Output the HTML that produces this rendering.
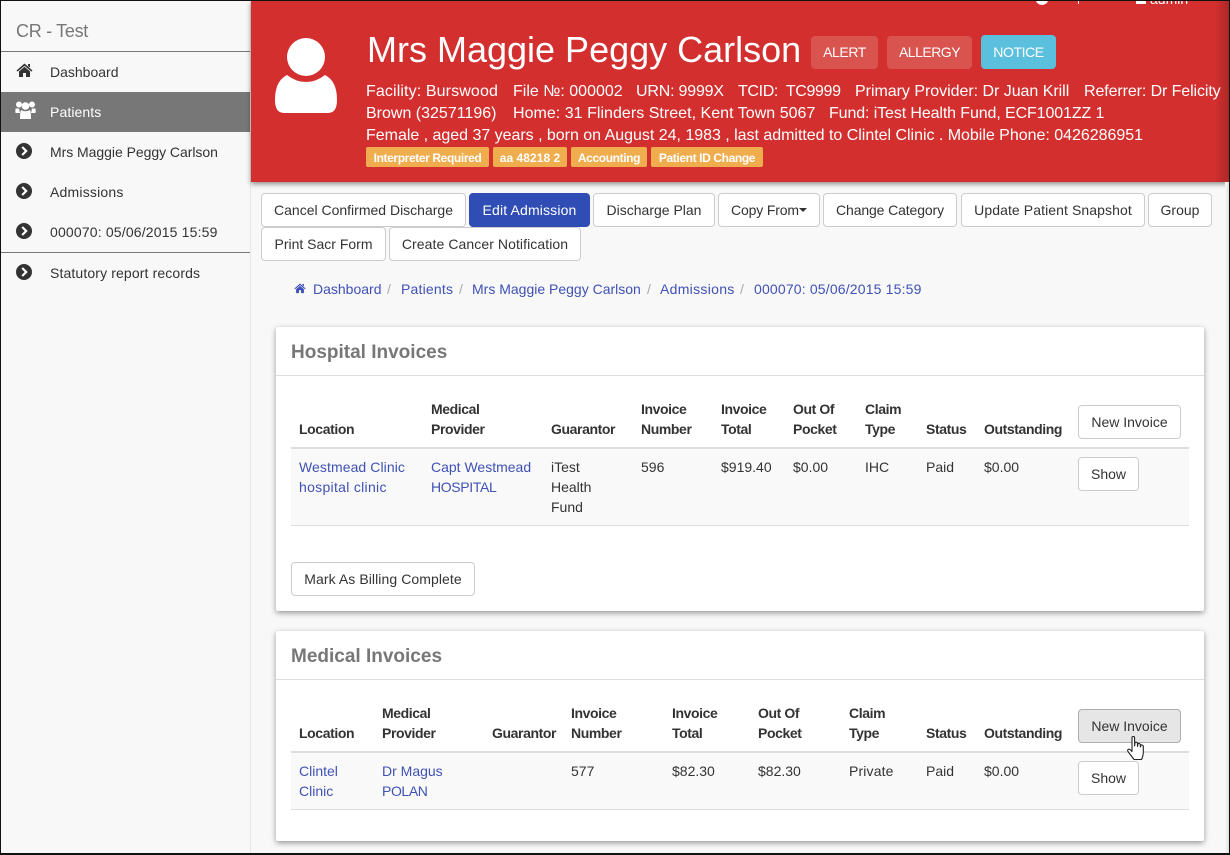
<!DOCTYPE html>
<html><head><meta charset="utf-8"><title>Invoices</title>
<style>
*{box-sizing:border-box}
html,body{margin:0;padding:0;width:1230px;height:855px;overflow:hidden;background:#f8f8f8;font-family:"Liberation Sans",sans-serif;font-size:14px;color:#333}
.a{position:absolute}
.t{position:absolute;white-space:nowrap;line-height:20px}
a{color:#3f51b5;text-decoration:none}
.btn{position:absolute;background:#fff;border:1px solid #ccc;border-radius:4px;display:flex;align-items:center;justify-content:center;white-space:nowrap;color:#333}
.w{color:#fff}
.lab{position:absolute;top:147px;height:20px;padding-top:1px;background:#f0ad4e;color:#fff;font-size:12px;font-weight:bold;letter-spacing:-.38px;display:flex;align-items:center;justify-content:center;border-radius:2px;white-space:nowrap}
.info{position:absolute;color:#fff;font-size:16px;line-height:22px;white-space:nowrap}
.panel{position:absolute;left:276px;width:928px;background:#fff;border-radius:2px;box-shadow:0 2px 6px rgba(0,0,0,.4)}
.h{font-weight:bold;color:#333;letter-spacing:-.4px}
.s{color:#aaa}
.pt{font-size:19px;font-weight:bold;color:#777}
</style></head><body>
<div class="a" style="left:1px;top:1px;width:250px;height:853px;background:#f8f8f8;border-right:1px solid #e7e7e7"></div>
<div class="t" style="left:16px;top:21px;font-size:18px;color:#777;letter-spacing:-.3px">CR - Test</div>
<div class="a" style="left:1px;top:51px;width:249px;height:1px;background:#777"></div>
<div class="a" style="left:1px;top:92px;width:249px;height:40px;background:#777"></div>
<div class="a" style="left:1px;top:252px;width:249px;height:1px;background:#777"></div>
<svg class="a" style="left:16px;top:63px" width="17" height="15" viewBox="0 0 17 15"><path d="M8.5 0.5 L16.5 7.5 L15.5 8.6 L8.5 2.7 L1.5 8.6 L0.5 7.5 Z M12 1 H14 V4.5 L12 3 Z M8.5 3.8 L14 8.4 V14 H10 V10 H7 V14 H3 V8.4 Z" fill="#333"/></svg>
<svg class="a" style="left:15px;top:100px" width="21" height="20" viewBox="0 0 21 20"><g fill="#fff"><circle cx="4" cy="4.5" r="3"/><circle cx="17" cy="4.5" r="3"/><circle cx="10.5" cy="6" r="3.8"/><path d="M0.5 8.5 H4 L5 13 H1 Q0.3 13 0.3 12 Z M20.5 8.5 H17 L16 13 H20 Q20.7 13 20.7 12 Z"/><path d="M6 10 Q10.5 12.5 15 10 Q16 12 16 19 H5 Q5 12 6 10 Z"/></g></svg>
<svg class="a" style="left:16px;top:143px" width="16" height="16" viewBox="0 0 16 16"><circle cx="8" cy="8" r="8" fill="#333"/><path d="M6.2 4 L10.2 8 L6.2 12" fill="none" stroke="#fff" stroke-width="2.2"/></svg>
<svg class="a" style="left:16px;top:183px" width="16" height="16" viewBox="0 0 16 16"><circle cx="8" cy="8" r="8" fill="#333"/><path d="M6.2 4 L10.2 8 L6.2 12" fill="none" stroke="#fff" stroke-width="2.2"/></svg>
<svg class="a" style="left:16px;top:223px" width="16" height="16" viewBox="0 0 16 16"><circle cx="8" cy="8" r="8" fill="#333"/><path d="M6.2 4 L10.2 8 L6.2 12" fill="none" stroke="#fff" stroke-width="2.2"/></svg>
<svg class="a" style="left:16px;top:264px" width="16" height="16" viewBox="0 0 16 16"><circle cx="8" cy="8" r="8" fill="#333"/><path d="M6.2 4 L10.2 8 L6.2 12" fill="none" stroke="#fff" stroke-width="2.2"/></svg>
<div class="t" style="left:50px;top:62px">Dashboard</div>
<div class="t w" style="left:50px;top:102px;letter-spacing:.1px">Patients</div>
<div class="t" style="left:50px;top:142px;letter-spacing:-.04px">Mrs Maggie Peggy Carlson</div>
<div class="t" style="left:50px;top:182px;letter-spacing:.2px">Admissions</div>
<div class="t" style="left:50px;top:222px;letter-spacing:.17px">000070: 05/06/2015 15:59</div>
<div class="t" style="left:50px;top:263px;letter-spacing:.13px">Statutory report records</div>

<div class="a" style="left:251px;top:1px;width:978px;height:181px;background:#d32f2f;box-shadow:0 2px 5px rgba(0,0,0,.45)"></div>
<div class="a" style="left:1215px;top:1px;width:14px;height:181px;background:linear-gradient(90deg,rgba(0,0,0,0),rgba(0,0,0,.18))"></div>
<div class="a" style="left:1036px;top:-5px;width:12px;height:10px;background:#fff;border-radius:50%"></div>
<div class="a" style="left:1078px;top:1px;width:1px;height:3px;background:#fff"></div>
<div class="a" style="left:1136px;top:1px;width:10px;height:3px;background:#fff"></div>
<div class="a" style="left:1150px;top:1px;width:40px;height:4px;overflow:hidden"><div class="t w" style="left:0;top:-12px">admin</div></div>
<svg class="a" style="left:275px;top:38px" width="63" height="75" viewBox="0 0 63 75"><circle cx="31" cy="19" r="19" fill="#fff"/><path d="M12 37 Q21 44 31 44 Q41 44 50 37 Q62 43 62 62 Q62 75 53 75 H9 Q0 75 0 62 Q0 43 12 37 Z" fill="#fff"/></svg>
<div class="t w" style="left:367px;top:30px;font-size:36px;line-height:40px">Mrs Maggie Peggy Carlson</div>
<div class="btn w" style="left:811px;top:36px;width:67px;height:33px;padding-bottom:2px;background:#d9534f;border-color:#d9534f;letter-spacing:-.4px">ALERT</div>
<div class="btn w" style="left:887px;top:36px;width:85px;height:33px;padding-bottom:2px;background:#d9534f;border-color:#d9534f;letter-spacing:-.5px">ALLERGY</div>
<div class="btn w" style="left:981px;top:35px;width:75px;height:34px;background:#5bc0de;border-color:#5bc0de;letter-spacing:-.4px">NOTICE</div>
<div class="info" style="left:366px;top:81px;letter-spacing:.12px">Facility: Burswood</div>
<div class="info" style="left:513px;top:81px">File №: 000002</div>
<div class="info" style="left:636px;top:81px;letter-spacing:-.2px">URN: 9999X</div>
<div class="info" style="left:738px;top:81px;letter-spacing:-.36px">TCID:&nbsp; TC9999</div>
<div class="info" style="left:855px;top:81px;letter-spacing:-.03px">Primary Provider: Dr Juan Krill</div>
<div class="info" style="left:1084px;top:81px;letter-spacing:-.1px">Referrer: Dr Felicity</div>
<div class="info" style="left:366px;top:103px">Brown (32571196)</div>
<div class="info" style="left:513px;top:103px;letter-spacing:.03px">Home: 31 Flinders Street, Kent Town 5067</div>
<div class="info" style="left:829px;top:103px;letter-spacing:-.11px">Fund: iTest Health Fund, ECF1001ZZ 1</div>
<div class="info" style="left:366px;top:125px;letter-spacing:-.02px">Female , aged 37 years , born on August 24, 1983 , last admitted to Clintel Clinic . Mobile Phone: 0426286951</div>
<div class="lab" style="left:366px;width:123px">Interpreter Required</div>
<div class="lab" style="left:493px;width:74px;letter-spacing:.05px">aa 48218 2</div>
<div class="lab" style="left:571px;width:76px">Accounting</div>
<div class="lab" style="left:651px;width:112px">Patient ID Change</div>

<div class="btn" style="left:261px;top:193px;width:205px;height:34px">Cancel Confirmed Discharge</div>
<div class="btn w" style="left:469px;top:193px;width:121px;height:34px;background:#2f4db5;border-color:#2f4db5;letter-spacing:.15px">Edit Admission</div>
<div class="btn" style="left:593px;top:193px;width:122px;height:34px">Discharge Plan</div>
<div class="btn" style="left:718px;top:193px;width:102px;height:34px;letter-spacing:-.15px">Copy From<span style="display:inline-block;margin-left:0;border-top:4px solid #333;border-left:4px solid transparent;border-right:4px solid transparent"></span></div>
<div class="btn" style="left:823px;top:193px;width:134px;height:34px;letter-spacing:-.12px">Change Category</div>
<div class="btn" style="left:961px;top:193px;width:184px;height:34px;letter-spacing:.09px">Update Patient Snapshot</div>
<div class="btn" style="left:1148px;top:193px;width:64px;height:34px">Group</div>
<div class="btn" style="left:261px;top:227px;width:125px;height:34px">Print Sacr Form</div>
<div class="btn" style="left:389px;top:227px;width:192px;height:34px;letter-spacing:.08px">Create Cancer Notification</div>

<svg class="a" style="left:294px;top:283px" width="12" height="11" viewBox="0 0 17 15"><path d="M8.5 0.5 L16.5 7.5 L15.5 8.6 L8.5 2.7 L1.5 8.6 L0.5 7.5 Z M12 1 H14 V4.5 L12 3 Z M8.5 3.8 L14 8.4 V14 H10 V10 H7 V14 H3 V8.4 Z" fill="#3f51b5"/></svg>
<a class="t" style="left:313px;top:279px">Dashboard</a><span class="t s" style="left:387px;top:279px">/</span>
<a class="t" style="left:401px;top:279px;letter-spacing:.2px">Patients</a><span class="t s" style="left:459px;top:279px">/</span>
<a class="t" style="left:472px;top:279px">Mrs Maggie Peggy Carlson</a><span class="t s" style="left:647px;top:279px">/</span>
<a class="t" style="left:660px;top:279px;letter-spacing:.3px">Admissions</a><span class="t s" style="left:740px;top:279px">/</span>
<a class="t" style="left:754px;top:279px;letter-spacing:.17px">000070: 05/06/2015 15:59</a>

<div class="panel" style="top:327px;height:284px"></div>
<div class="t pt" style="left:291px;top:343px">Hospital Invoices</div>
<div class="a" style="left:276px;top:375px;width:928px;height:1px;background:#ddd"></div>
<div class="a" style="left:291px;top:447px;width:898px;height:2px;background:#ddd"></div>
<div class="a" style="left:291px;top:449px;width:898px;height:76px;background:#f9f9f9"></div>
<div class="a" style="left:291px;top:525px;width:898px;height:1px;background:#ddd"></div>
<div class="t h" style="left:299px;top:419px">Location</div>
<div class="t h" style="left:431px;top:399px">Medical<br>Provider</div>
<div class="t h" style="left:551px;top:419px">Guarantor</div>
<div class="t h" style="left:641px;top:399px">Invoice<br>Number</div>
<div class="t h" style="left:721px;top:399px">Invoice<br>Total</div>
<div class="t h" style="left:793px;top:399px">Out Of<br>Pocket</div>
<div class="t h" style="left:865px;top:399px">Claim<br>Type</div>
<div class="t h" style="left:926px;top:419px">Status</div>
<div class="t h" style="left:984px;top:419px">Outstanding</div>
<div class="btn" style="left:1078px;top:405px;width:103px;height:34px">New Invoice</div>
<a class="t" style="left:299px;top:457px;letter-spacing:.08px">Westmead Clinic</a>
<a class="t" style="left:299px;top:477px;letter-spacing:.3px">hospital clinic</a>
<a class="t" style="left:431px;top:457px">Capt Westmead</a>
<a class="t" style="left:431px;top:477px;letter-spacing:-.35px">HOSPITAL</a>
<div class="t" style="left:551px;top:457px">iTest<br>Health<br>Fund</div>
<div class="t" style="left:641px;top:457px">596</div>
<div class="t" style="left:721px;top:457px">$919.40</div>
<div class="t" style="left:793px;top:457px">$0.00</div>
<div class="t" style="left:865px;top:457px">IHC</div>
<div class="t" style="left:926px;top:457px">Paid</div>
<div class="t" style="left:984px;top:457px">$0.00</div>
<div class="btn" style="left:1078px;top:457px;width:61px;height:34px">Show</div>
<div class="btn" style="left:291px;top:562px;width:184px;height:34px;letter-spacing:.08px">Mark As Billing Complete</div>

<div class="panel" style="top:631px;height:210px"></div>
<div class="t pt" style="left:291px;top:647px">Medical Invoices</div>
<div class="a" style="left:276px;top:679px;width:928px;height:1px;background:#ddd"></div>
<div class="a" style="left:291px;top:751px;width:898px;height:2px;background:#ddd"></div>
<div class="a" style="left:291px;top:753px;width:898px;height:56px;background:#f9f9f9"></div>
<div class="a" style="left:291px;top:809px;width:898px;height:1px;background:#ddd"></div>
<div class="t h" style="left:299px;top:723px">Location</div>
<div class="t h" style="left:382px;top:703px">Medical<br>Provider</div>
<div class="t h" style="left:492px;top:723px">Guarantor</div>
<div class="t h" style="left:571px;top:703px">Invoice<br>Number</div>
<div class="t h" style="left:672px;top:703px">Invoice<br>Total</div>
<div class="t h" style="left:758px;top:703px">Out Of<br>Pocket</div>
<div class="t h" style="left:849px;top:703px">Claim<br>Type</div>
<div class="t h" style="left:926px;top:723px">Status</div>
<div class="t h" style="left:984px;top:723px">Outstanding</div>
<div class="btn" style="left:1078px;top:709px;width:103px;height:34px;background:#e6e6e6;border-color:#adadad">New Invoice</div>
<a class="t" style="left:299px;top:761px">Clintel<br>Clinic</a>
<a class="t" style="left:382px;top:761px">Dr Magus</a>
<a class="t" style="left:382px;top:781px;letter-spacing:-.4px">POLAN</a>
<div class="t" style="left:571px;top:761px">577</div>
<div class="t" style="left:672px;top:761px">$82.30</div>
<div class="t" style="left:758px;top:761px">$82.30</div>
<div class="t" style="left:849px;top:761px;letter-spacing:.15px">Private</div>
<div class="t" style="left:926px;top:761px">Paid</div>
<div class="t" style="left:984px;top:761px">$0.00</div>
<div class="btn" style="left:1078px;top:761px;width:61px;height:34px">Show</div>
<svg class="a" style="left:1127px;top:736px" width="19" height="25" viewBox="0 0 19 25"><path d="M5 2 Q5 0.5 6.3 0.5 Q7.6 0.5 7.6 2 V10 L8 6.5 Q9.5 5.6 10.5 7 V10.5 L11 7.6 Q12.5 7 13.4 8.5 V11 L14 9 Q15.5 8.5 16.3 10 V16 Q16.3 20 14.5 23.5 H7 L1 15.5 Q0 14 1.5 13.2 Q2.8 12.8 5 15.5 Z" fill="#fff" stroke="#222" stroke-width="1.1" stroke-linejoin="round"/></svg>

<div class="a" style="left:1225px;top:182px;width:4px;height:672px;background:linear-gradient(90deg,#f8f8f8,#ddd)"></div>
<div class="a" style="left:0;top:0;width:1230px;height:855px;border:solid #111;border-width:1px 1px 2px 1px;pointer-events:none"></div>
</body></html>
